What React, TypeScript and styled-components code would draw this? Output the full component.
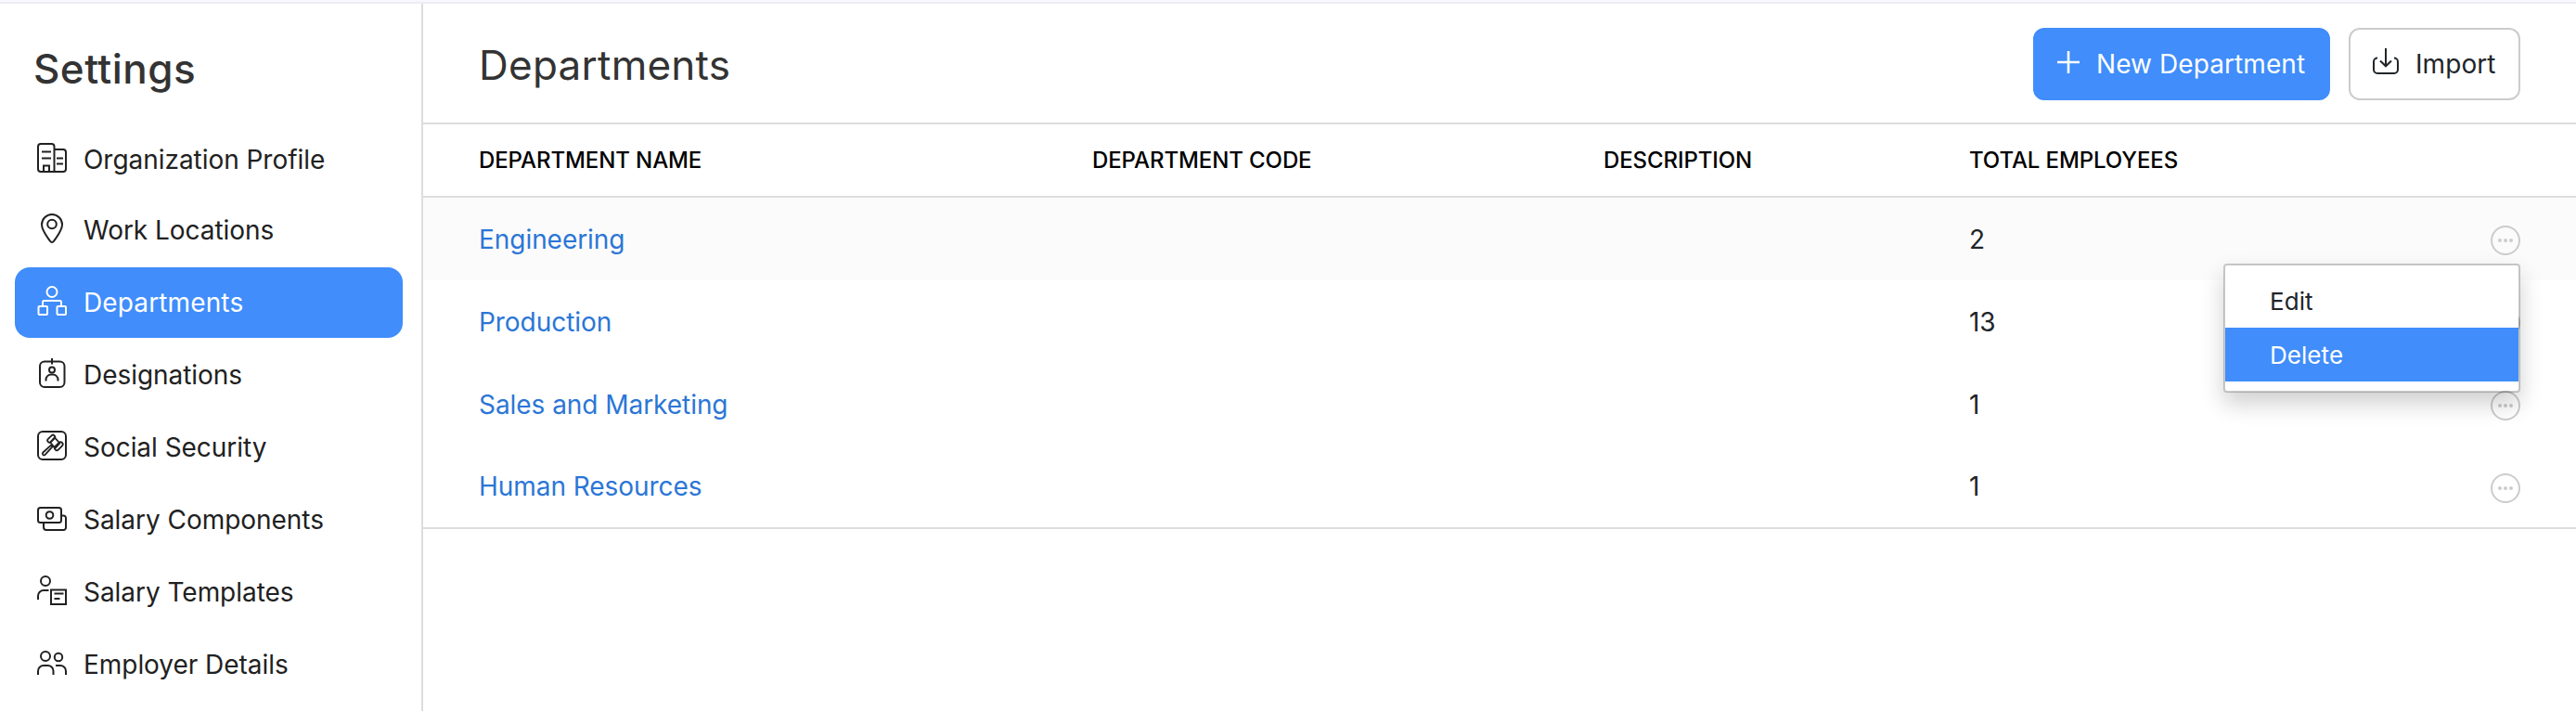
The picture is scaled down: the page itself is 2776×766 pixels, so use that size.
import React from "react";
import styled, { createGlobalStyle, css } from "styled-components";

const GlobalStyle = createGlobalStyle`
  * { box-sizing: border-box; }
  body {
    margin: 0;
    background: #fff;
    color: #212529;
    font-family: Inter, "Liberation Sans", sans-serif;
    font-size: 28px;
    letter-spacing: -0.05px;
    -webkit-font-smoothing: antialiased;
  }
`;

const Page = styled.div`
  display: flex;
  flex-direction: column;
  height: 766px;
  overflow: hidden;
`;

const TopStrip = styled.div`
  height: 4px;
  flex: none;
  background: #f7f7fe;
  border-bottom: 2px solid #eeeef2;
`;

const Body = styled.div`
  display: flex;
  flex: 1;
  min-height: 0;
`;

const Sidebar = styled.nav`
  width: 456px;
  flex: none;
  padding: 43px 20px 0 16px;
  border-right: 2px solid #ddd;
`;

const SidebarTitle = styled.h1`
  margin: 0 0 33px 20px;
  font-size: 44px;
  line-height: 54px;
  font-weight: 500;
  letter-spacing: 0.45px;
  color: #333;
`;

const MenuList = styled.ul`
  margin: 0;
  padding: 0;
  list-style: none;
`;

const MenuEntry = styled.li<{ $active?: boolean }>`
  display: flex;
  align-items: center;
  height: 76px;
  margin-bottom: 2px;
  padding: 0 24px;
  gap: 18px;
  border-radius: 16px;
  color: ${(p) => (p.$active ? "#fff" : "#212121")};
  background: ${(p) => (p.$active ? "#408dfb" : "transparent")};
  letter-spacing: ${(p) => (p.$active ? "0.13px" : "-0.04px")};
  white-space: nowrap;

  &:first-child { margin-bottom: 0; }
  svg { margin-top: -4px; }
`;

const Icon = styled.svg`
  display: block;
  flex: none;
  fill: none;
  stroke: currentColor;
  stroke-width: 2;
`;

const Main = styled.main`
  flex: 1;
  min-width: 0;
`;

const Header = styled.header`
  display: flex;
  align-items: center;
  height: 130px;
  padding: 2px 60px 0;
  border-bottom: 2px solid #ddd;
`;

const Title = styled.h2`
  flex: 1;
  margin: 1px 0 0;
  font-size: 44px;
  line-height: 54px;
  font-weight: 400;
  letter-spacing: 0.25px;
  color: #333;
`;

const Actions = styled.div`
  display: flex;
  gap: 20px;
`;

const Button = styled.button<{ $primary?: boolean }>`
  display: flex;
  align-items: center;
  width: 185px;
  height: 78px;
  padding: 0 0 0 24px;
  gap: 18px;
  border: 2px solid #ccc;
  border-radius: 12px;
  background: #fff;
  color: #212529;
  font: inherit;
  letter-spacing: 0.08px;
  white-space: nowrap;

  svg { margin-top: -6px; }

  ${(p) =>
    p.$primary &&
    css`
      width: 320px;
      border-color: #408dfb;
      background: #408dfb;
      color: #fff;

      svg {
        margin-top: -4px;
        stroke-width: 2.6;
      }
    `}
`;

const rowGrid = css`
  display: grid;
  grid-template-columns: 661px 551px 394px 1fr 32px;
  align-items: center;
  padding: 0 60px;
`;

const TableHead = styled.div`
  ${rowGrid}
  height: 79px;
  border-bottom: 2px solid #ddd;
  font-size: 24px;
  font-weight: 500;
  letter-spacing: -0.1px;
  color: #000;
`;

const TableBody = styled.div`
  border-bottom: 2px solid #ddd;
`;

const TableRow = styled.div<{ $hovered?: boolean }>`
  ${rowGrid}
  height: 89px;
  background: ${(p) => (p.$hovered ? "#fbfbfb" : "#fff")};
  &:last-child { height: 88px; }
`;

const NameLink = styled.a`
  color: #2b76d6;
`;

const MoreCell = styled.div`
  position: relative;
  grid-column: 5;
  margin-top: 3px;
  color: #ccc;
`;

const Popup = styled.div`
  position: absolute;
  z-index: 1;
  top: 41px;
  right: 0;
  width: 320px;
  height: 139px;
  padding-top: 9px;
  border: 2px solid rgba(0, 0, 0, 0.2);
  border-radius: 4px;
  background: #fff;
  background-clip: padding-box;
  box-shadow: 0 12px 24px rgba(0, 0, 0, 0.19);
`;

const PopupItem = styled.div<{ $active?: boolean }>`
  height: 58px;
  padding-left: 48px;
  font-size: 26px;
  line-height: 59px;
  letter-spacing: 0.05px;
  color: ${(p) => (p.$active ? "#fff" : "#212529")};
  background: ${(p) => (p.$active ? "#408dfb" : "transparent")};
`;

const icons: Record<string, React.ReactNode> = {
  organization: (
    <>
      <path d="M18.500 31V4a3 3 0 0 0-3-3H4a3 3 0 0 0-3 3v24a3 3 0 0 0 3 3h24a3 3 0 0 0 3-3V10a3 3 0 0 0-3-3h-9.500" />
      <path d="M5 9.500h10M5 16.500h10M21 16.500h7M21 22.500h7M7 31v-6.500h6V31" />
    </>
  ),
  location: (
    <>
      <path d="M16 31c-1 0-1.600-.6-2-1.200C10.500 24.700 5 18 5 12a11 11 0 0 1 22 0c0 6-5.500 12.700-9 17.800-.4.600-1 1.200-2 1.200z" />
      <circle cx="16" cy="11.500" r="4.800" />
    </>
  ),
  departments: (
    <>
      <circle cx="16" cy="6.500" r="5.500" />
      <path d="M6 22v-4.500a1.500 1.500 0 0 1 1.500-1.500h17a1.500 1.500 0 0 1 1.500 1.500V22" />
      <rect x="1.500" y="22" width="9.500" height="9" rx="1" />
      <rect x="21.500" y="22" width="9.500" height="9" rx="1" />
    </>
  ),
  designations: (
    <>
      <rect x="3" y="3.500" width="26.500" height="27.500" rx="5" />
      <path d="M16 0v6.500M9.500 24.500V23a5.500 5.500 0 0 1 5.500-5.500h2A5.500 5.500 0 0 1 22.500 23v1.500" />
      <circle cx="16" cy="12.500" r="3" />
    </>
  ),
  security: (
    <>
      <rect x="1" y="1" width="30" height="30" rx="5" />
      <g strokeWidth="1.800" strokeLinejoin="round">
        <path d="M14 12.500 18.800 7.300l5.700 6.200-5 5.300zM15.800 14.800l-9.500 8.700a1.600 1.600 0 0 0 2.300 2.300l8.700-9.500" />
        <rect x="10.500" y="6.500" width="9.500" height="4.400" rx="2.200" transform="rotate(-45 15.200 8.700)" />
        <rect x="18" y="14.300" width="10.500" height="4.800" rx="2.400" transform="rotate(-45 23.200 16.700)" />
      </g>
    </>
  ),
  components: (
    <>
      <rect x="1" y="5" width="25" height="16" rx="2.500" />
      <circle cx="13.500" cy="13" r="3.800" />
      <path d="M7 21v5a3 3 0 0 0 3 3h18.500a2.500 2.500 0 0 0 2.500-2.500V16a2.500 2.500 0 0 0-2.500-2.500H26" />
    </>
  ),
  templates: (
    <>
      <circle cx="9" cy="6" r="5" />
      <path d="M1 26v-4a6 6 0 0 1 6-6h5.500M18.500 19.500h10M18.500 25h6" />
      <rect x="15" y="15.500" width="16" height="15.500" />
    </>
  ),
  employers: (
    <>
      <circle cx="9" cy="9" r="5" />
      <circle cx="23" cy="10" r="4.200" />
      <path d="M1 29v-4a6 6 0 0 1 6-6h4.500a6 6 0 0 1 6 6v4M20 19h5a6 6 0 0 1 6 6v4" />
    </>
  ),
};

const menu = [
  ["organization", "Organization Profile"],
  ["location", "Work Locations"],
  ["departments", "Departments"],
  ["designations", "Designations"],
  ["security", "Social Security"],
  ["components", "Salary Components"],
  ["templates", "Salary Templates"],
  ["employers", "Employer Details"],
];

const departments = [
  { name: "Engineering", total: 2 },
  { name: "Production", total: 13 },
  { name: "Sales and Marketing", total: 1 },
  { name: "Human Resources", total: 1 },
];

const MoreIcon = () => (
  <Icon width="32" height="32" viewBox="0 0 32 32">
    <circle cx="16" cy="16" r="15" />
    <g fill="currentColor" stroke="none">
      <circle cx="10" cy="16" r="2" />
      <circle cx="16" cy="16" r="2" />
      <circle cx="22" cy="16" r="2" />
    </g>
  </Icon>
);

export default function App() {
  return (
    <Page>
      <GlobalStyle />
      <TopStrip />
      <Body>
        <Sidebar>
          <SidebarTitle>Settings</SidebarTitle>
          <MenuList>
            {menu.map(([icon, label]) => (
              <MenuEntry key={icon} $active={icon === "departments"}>
                <Icon width="32" height="32" viewBox="0 0 32 32">{icons[icon]}</Icon>
                {label}
              </MenuEntry>
            ))}
          </MenuList>
        </Sidebar>
        <Main>
          <Header>
            <Title>Departments</Title>
            <Actions>
              <Button $primary>
                <Icon width="24" height="24" viewBox="0 0 24 24">
                  <path d="M12 0v24M0 12h24" />
                </Icon>
                New Department
              </Button>
              <Button>
                <Icon width="28" height="28" viewBox="0 0 28 28">
                  <path d="M14 0v19M8 13.500l6 5.800 6-5.800M5 10.500a4 4 0 0 0-4 4V23a4 4 0 0 0 4 4h18a4 4 0 0 0 4-4v-8.500a4 4 0 0 0-4-4" />
                </Icon>
                Import
              </Button>
            </Actions>
          </Header>
          <TableHead>
            <span>DEPARTMENT NAME</span>
            <span>DEPARTMENT CODE</span>
            <span>DESCRIPTION</span>
            <span>TOTAL EMPLOYEES</span>
          </TableHead>
          <TableBody>
            {departments.map(({ name, total }, i) => (
              <TableRow key={name} $hovered={i === 0}>
                <NameLink>{name}</NameLink>
                <span />
                <span />
                <span>{total}</span>
                <MoreCell>
                  <MoreIcon />
                  {i === 0 && (
                    <Popup>
                      <PopupItem>Edit</PopupItem>
                      <PopupItem $active>Delete</PopupItem>
                    </Popup>
                  )}
                </MoreCell>
              </TableRow>
            ))}
          </TableBody>
        </Main>
      </Body>
    </Page>
  );
}
